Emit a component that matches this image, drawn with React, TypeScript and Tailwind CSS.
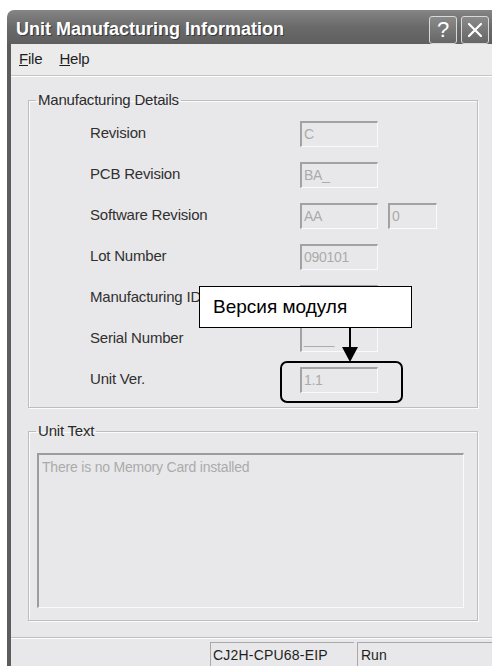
import type { ReactNode } from "react";

const sans = "font-['Liberation_Sans',Arial,sans-serif]";

type Row = { label: string; values: string[] };

const rows: Row[] = [
  { label: "Revision", values: ["C"] },
  { label: "PCB Revision", values: ["BA_"] },
  { label: "Software Revision", values: ["AA", "0"] },
  { label: "Lot Number", values: ["090101"] },
  { label: "Manufacturing ID", values: [""] },
  { label: "Serial Number", values: ["____"] },
  { label: "Unit Ver.", values: ["1.1"] },
];

function SunkenField({ value, narrow }: { value: string; narrow?: boolean }) {
  return (
    <div
      className={`${
        narrow ? "w-[49px]" : "w-[78px]"
      } h-[26px] border-t-2 border-l-2 border-b border-r border-t-[#a2a2a2] border-l-[#a2a2a2] border-b-[#fafafa] border-r-[#fafafa] pl-[2px] text-[14px] leading-[22px] text-[#ababab] tracking-[-0.3px]`}
    >
      {value}
    </div>
  );
}

function GroupBox({
  title,
  className,
  children,
}: {
  title: string;
  className?: string;
  children: ReactNode;
}) {
  return (
    <fieldset
      className={`border border-[#bdbdbd] shadow-[inset_1px_1px_0_#fbfbfb,1px_1px_0_#fbfbfb] ${className ?? ""}`}
    >
      <legend className="ml-[7px] px-[2px] text-[15px] leading-[16px] text-[#2b2b2b] tracking-[-0.2px]">
        {title}
      </legend>
      {children}
    </fieldset>
  );
}

function CaptionButton({ children }: { children: ReactNode }) {
  return (
    <div className="w-[28px] h-[28px] rounded-[3px] border border-[#d8d8d8] bg-gradient-to-b from-[#8a8a8a] to-[#666666] flex items-center justify-center text-white">
      {children}
    </div>
  );
}

export default function App() {
  return (
    <div className={`relative w-[492px] h-[666px] bg-white overflow-hidden ${sans}`}>
      <div className="ml-[7px] mt-[10px] w-[485px] h-[656px] flex flex-col">
        {/* title bar */}
        <div className="h-[37px] rounded-tl-[7px] bg-gradient-to-b from-[#858585] via-[#6a6a6a] to-[#5f5f5f] flex items-center pl-[9px] pr-[3px]">
          <span className="flex-1 text-[18px] font-bold text-white [text-shadow:1px_1px_0_#3a3a3a] pt-[4px]">
            Unit Manufacturing Information
          </span>
          <div className="flex gap-[4px] pt-[6px]">
            <CaptionButton>
              <span className="text-[22px] leading-none">?</span>
            </CaptionButton>
            <CaptionButton>
              <svg width="16" height="16" viewBox="0 0 16 16">
                <path d="M2 2 L14 14 M14 2 L2 14" stroke="white" strokeWidth="2.2" strokeLinecap="round" />
              </svg>
            </CaptionButton>
          </div>
        </div>

        {/* body with left frame */}
        <div className="flex-1 border-l-4 border-l-[#5c5c5c] bg-[#e8e8ea] flex flex-col">
          <div className="h-[31px] bg-[#ebebec] flex items-center gap-[17px] pl-[8px] text-[15px] text-[#1e1e1e] tracking-[-0.2px]">
            <span>
              <span className="underline">F</span>ile
            </span>
            <span>
              <span className="underline">H</span>elp
            </span>
          </div>
          <div className="h-[2px] border-t border-[#c6c6c6] bg-white" />

          <GroupBox title="Manufacturing Details" className="ml-[17px] mt-[15px] w-[450px]">
            <div className="pt-[5px] pb-[7px] pl-[61px] flex flex-col">
              {rows.map((row) => (
                <div key={row.label} className="h-[41px] flex items-center">
                  <span className="w-[210px] text-[15px] text-[#303030] tracking-[-0.2px]">
                    {row.label}
                  </span>
                  <div className="flex gap-[10px]">
                    {row.values.map((v, i) => (
                      <SunkenField key={i} value={v} narrow={i > 0} />
                    ))}
                  </div>
                </div>
              ))}
            </div>
          </GroupBox>

          <GroupBox title="Unit Text" className="ml-[17px] mt-[15px] w-[450px]">
            <div className="pt-[14px] pb-[12px] pl-[8px] pr-[13px]">
              <div className="h-[155px] border-t-2 border-l-2 border-b border-r border-t-[#9c9c9c] border-l-[#9c9c9c] border-b-[#fafafa] border-r-[#fafafa] px-[3px] pt-[2px] text-[14px] text-[#ababab] tracking-[-0.2px]">
                There is no Memory Card installed
              </div>
            </div>
          </GroupBox>

          {/* status bar */}
          <div className="mt-[16px] h-[2px] border-t border-[#bdbdbd] bg-white" />
          <div className="mt-[3px] flex-1 flex pl-[199px] gap-[3px]">
            <div className="w-[144px] border-t border-l border-[#a9a9a9] pl-[2px] pt-[2px] text-[14px] text-[#1e1e1e] tracking-[0.2px]">
              CJ2H-CPU68-EIP
            </div>
            <div className="flex-1 border-t border-l border-[#a9a9a9] pl-[3px] pt-[2px] text-[14px] text-[#1e1e1e]">
              Run
            </div>
          </div>
        </div>
      </div>

      {/* callout pointing at the unit version field */}
      <div className="absolute left-[199px] top-[286px] w-[213px] h-[42px] bg-white border-[1.5px] border-black flex items-center pl-[13px] text-[19px] text-black">
        Версия модуля
      </div>
      <div className="absolute left-[349px] top-[328px] w-[1.5px] h-[22px] bg-black" />
      <svg className="absolute left-[342px] top-[347px]" width="16" height="15" viewBox="0 0 16 15">
        <path d="M0 0 L16 0 L8 15 Z" fill="black" />
      </svg>
      <div className="absolute left-[280px] top-[361px] w-[123px] h-[42px] rounded-[7px] border-2 border-black" />
    </div>
  );
}
